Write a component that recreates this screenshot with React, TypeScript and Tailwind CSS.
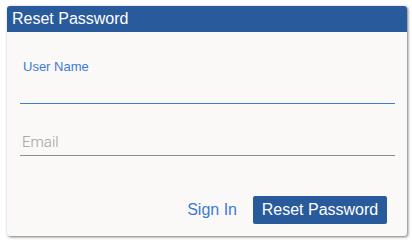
export default function App() {
  return (
    <div className="min-h-screen bg-white pl-[7px] pt-[6px] font-['Liberation_Sans',Arial,sans-serif]">
      <div className="w-[400px] h-[230px] rounded-[3px] bg-[#faf9f8] shadow-[1px_1px_3px_rgba(0,0,0,0.55)] overflow-hidden flex flex-col">
        <div className="h-[26px] bg-[#285a9c] pl-[5px] flex items-center">
          <h1 className="text-white text-[16px] leading-[18px]">Reset Password</h1>
        </div>

        <div className="flex flex-col pl-[13px] pr-[12px] pt-[27px]">
          <div className="flex flex-col">
            <label className="pl-[3px] text-[13px] leading-[15px] font-medium text-[#3a7bd5]">User Name</label>
            <input className="h-[29px] bg-transparent outline-none" type="text" />
            <div className="h-px bg-[#3a7ed8]" />
          </div>

          <div className="mt-[24px] flex flex-col">
            <input
              className="h-[27px] bg-transparent pl-[2px] font-['Roboto',sans-serif] text-[15px] font-light leading-[18px] outline-none placeholder:text-[#9e9e9e]"
              type="email"
              placeholder="Email"
            />
            <div className="h-px bg-[#8c8c8c]" />
          </div>

          <div className="mt-[40px] flex items-center justify-end gap-[16px] pr-[8px]">
            <button className="text-[16px] leading-[18px] text-[#3a7bd5]">Sign In</button>
            <button className="h-[28px] w-[134px] rounded-[2px] bg-[#285a9c] text-[16px] leading-[18px] text-white">
              Reset Password
            </button>
          </div>
        </div>
      </div>
    </div>
  );
}
